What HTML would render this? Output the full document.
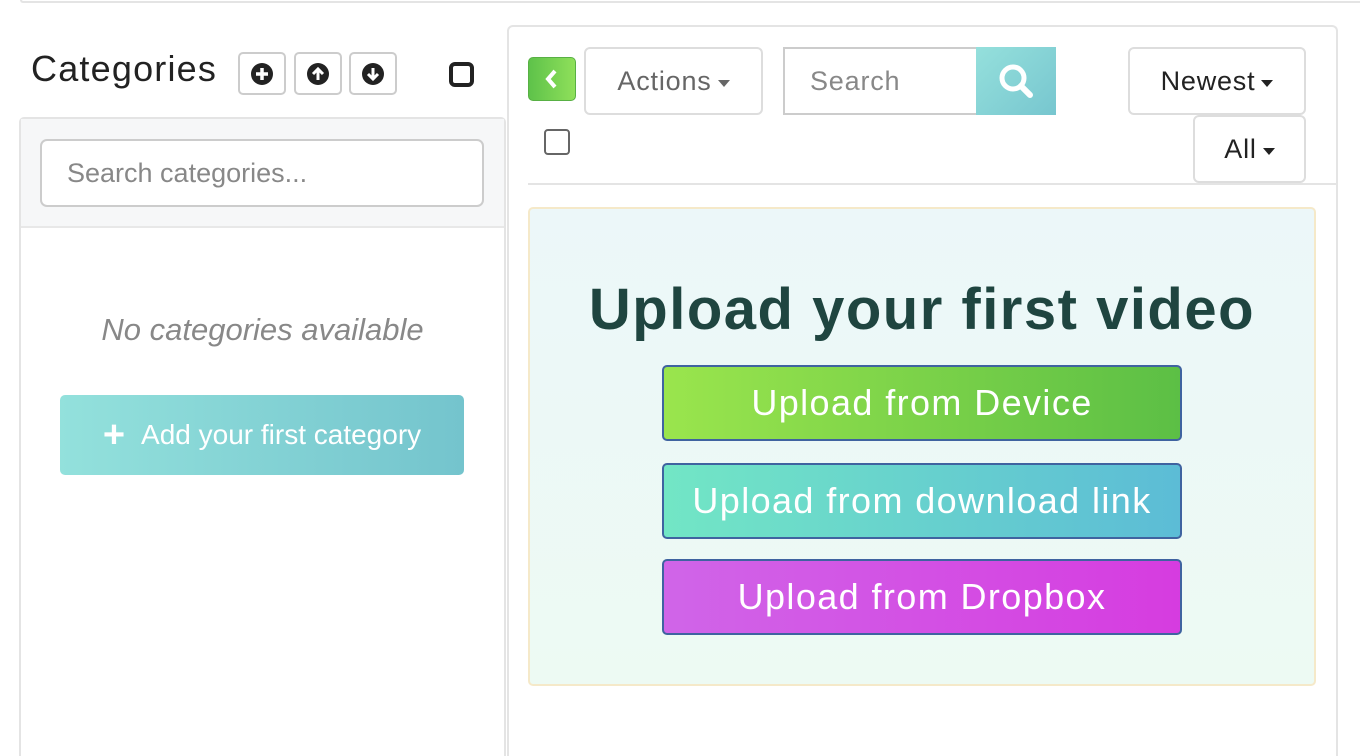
<!DOCTYPE html>
<html style="overflow:hidden;width:1360px;height:756px"><head><style>
*{box-sizing:border-box;margin:0;padding:0}
body{width:1360px;height:756px;background:#fff;position:relative;overflow:hidden;font-family:"Liberation Sans",sans-serif}
.a{position:absolute}
.btn{position:absolute;border:2px solid #ddd;border-radius:6px;background:#fff;display:flex;align-items:center;justify-content:center;font-size:27px;color:#666;letter-spacing:0.8px}
.car{display:inline-block;width:0;height:0;border-left:6px solid transparent;border-right:6px solid transparent;border-top:7px solid currentColor;margin-left:6px;margin-top:4px}
.up{position:absolute;left:662px;width:520px;height:76px;border:2px solid #3f63a0;border-radius:5px;color:#fff;font-size:36px;letter-spacing:1.4px;display:flex;align-items:center;justify-content:center}
.ib{position:absolute;top:52px;width:48px;height:43px;border:2px solid #ccc;border-radius:5px;display:flex;align-items:center;justify-content:center}
</style></head><body>
<div class="a" style="left:20px;top:0;width:1340px;height:3px;border:2px solid #e4e4e4;border-top:none;border-right:none;border-radius:0 0 0 6px"></div>
<div class="a" style="left:31px;top:48px;font-size:36px;color:#222;letter-spacing:1.2px">Categories</div>
<div class="ib" style="left:238px"><svg width="24" height="24" viewBox="0 0 24 24"><circle cx="12" cy="12" r="11" fill="#222"/><path d="M12 6v12M6 12h12" stroke="#fff" stroke-width="3.5"/></svg></div>
<div class="ib" style="left:294px"><svg width="24" height="24" viewBox="0 0 24 24"><circle cx="12" cy="12" r="11" fill="#222"/><path d="M12 18V8M7 12l5-5 5 5" stroke="#fff" stroke-width="3" fill="none"/></svg></div>
<div class="ib" style="left:349px"><svg width="24" height="24" viewBox="0 0 24 24"><circle cx="12" cy="12" r="11" fill="#222"/><path d="M12 6v10M7 12l5 5 5-5" stroke="#fff" stroke-width="3" fill="none"/></svg></div>
<div class="a" style="left:449px;top:62px;width:25px;height:25px;border:4px solid #222;border-radius:6px"></div>
<div class="a" style="left:19px;top:117px;width:487px;height:639px;border:2px solid #e4e4e4;border-bottom:none;border-radius:5px 5px 0 0"></div>
<div class="a" style="left:21px;top:119px;width:483px;height:109px;background:#f6f7f8;border-bottom:2px solid #e8e8e8"></div>
<div class="a" style="left:40px;top:139px;width:444px;height:68px;border:2px solid #ccc;border-radius:7px;background:#fff;font-size:27px;color:#888;padding:17px 0 0 25px">Search categories...</div>
<div class="a" style="left:0;width:525px;top:312px;text-align:center;font-size:31px;font-style:italic;color:#888">No categories available</div>
<div class="a" style="left:60px;top:395px;width:404px;height:80px;border-radius:5px;background:linear-gradient(90deg,#93e1dc,#74c4cd);color:#fff;font-size:28px;display:flex;align-items:center;justify-content:center"><span style="font-size:38px;font-weight:bold;margin-right:16px">+</span>Add your first category</div>
<div class="a" style="left:507px;top:25px;width:831px;height:731px;border:2px solid #e4e4e4;border-bottom:none;border-radius:6px 6px 0 0"></div>
<div class="a" style="left:528px;top:57px;width:48px;height:44px;border-radius:5px;background:linear-gradient(90deg,#5ec24a,#8fe05a);border:1px solid #58b044;color:#fff;display:flex;align-items:center;justify-content:center"><svg width="16" height="22"><path d="M11 3L4 11l7 8" stroke="#fff" stroke-width="4" fill="none"/></svg></div>
<div class="btn" style="left:584px;top:47px;width:179px;height:68px">Actions<span class="car"></span></div>
<div class="a" style="left:783px;top:47px;width:195px;height:68px;border:2px solid #ccc;border-right:none;font-size:27px;color:#888;padding:17px 0 0 25px;letter-spacing:0.8px">Search</div>
<div class="a" style="left:976px;top:47px;width:80px;height:68px;background:linear-gradient(135deg,#95e0dc,#77c6cf);display:flex;align-items:center;justify-content:center"><svg width="40" height="40"><circle cx="17" cy="17" r="11" stroke="#fff" stroke-width="5" fill="none"/><path d="M25 25l9 9" stroke="#fff" stroke-width="6" stroke-linecap="round"/></svg></div>
<div class="btn" style="left:1128px;top:47px;width:178px;height:68px;color:#222">Newest<span class="car"></span></div>
<div class="btn" style="left:1193px;top:115px;width:113px;height:68px;color:#222">All<span class="car"></span></div>
<div class="a" style="left:544px;top:129px;width:26px;height:26px;border:2px solid #666;border-radius:4px"></div>
<div class="a" style="left:528px;top:183px;width:808px;height:2px;background:#e4e4e4"></div>
<div class="a" style="left:528px;top:207px;width:788px;height:479px;border:2px solid #f5e9c9;border-radius:5px;background:linear-gradient(180deg,#ecf7f9,#edfaf3)"></div>
<div class="a" style="left:528px;width:788px;top:276px;text-align:center;font-size:58px;font-weight:bold;color:#1f4540;letter-spacing:1.5px">Upload your first video</div>
<div class="up" style="top:365px;background:linear-gradient(90deg,#9ae54d,#5cbf45)">Upload from Device</div>
<div class="up" style="top:463px;background:linear-gradient(90deg,#72e6c5,#5cbcd6)">Upload from download link</div>
<div class="up" style="top:559px;background:linear-gradient(90deg,#d065e8,#d63ce0)">Upload from Dropbox</div>
</body></html>
